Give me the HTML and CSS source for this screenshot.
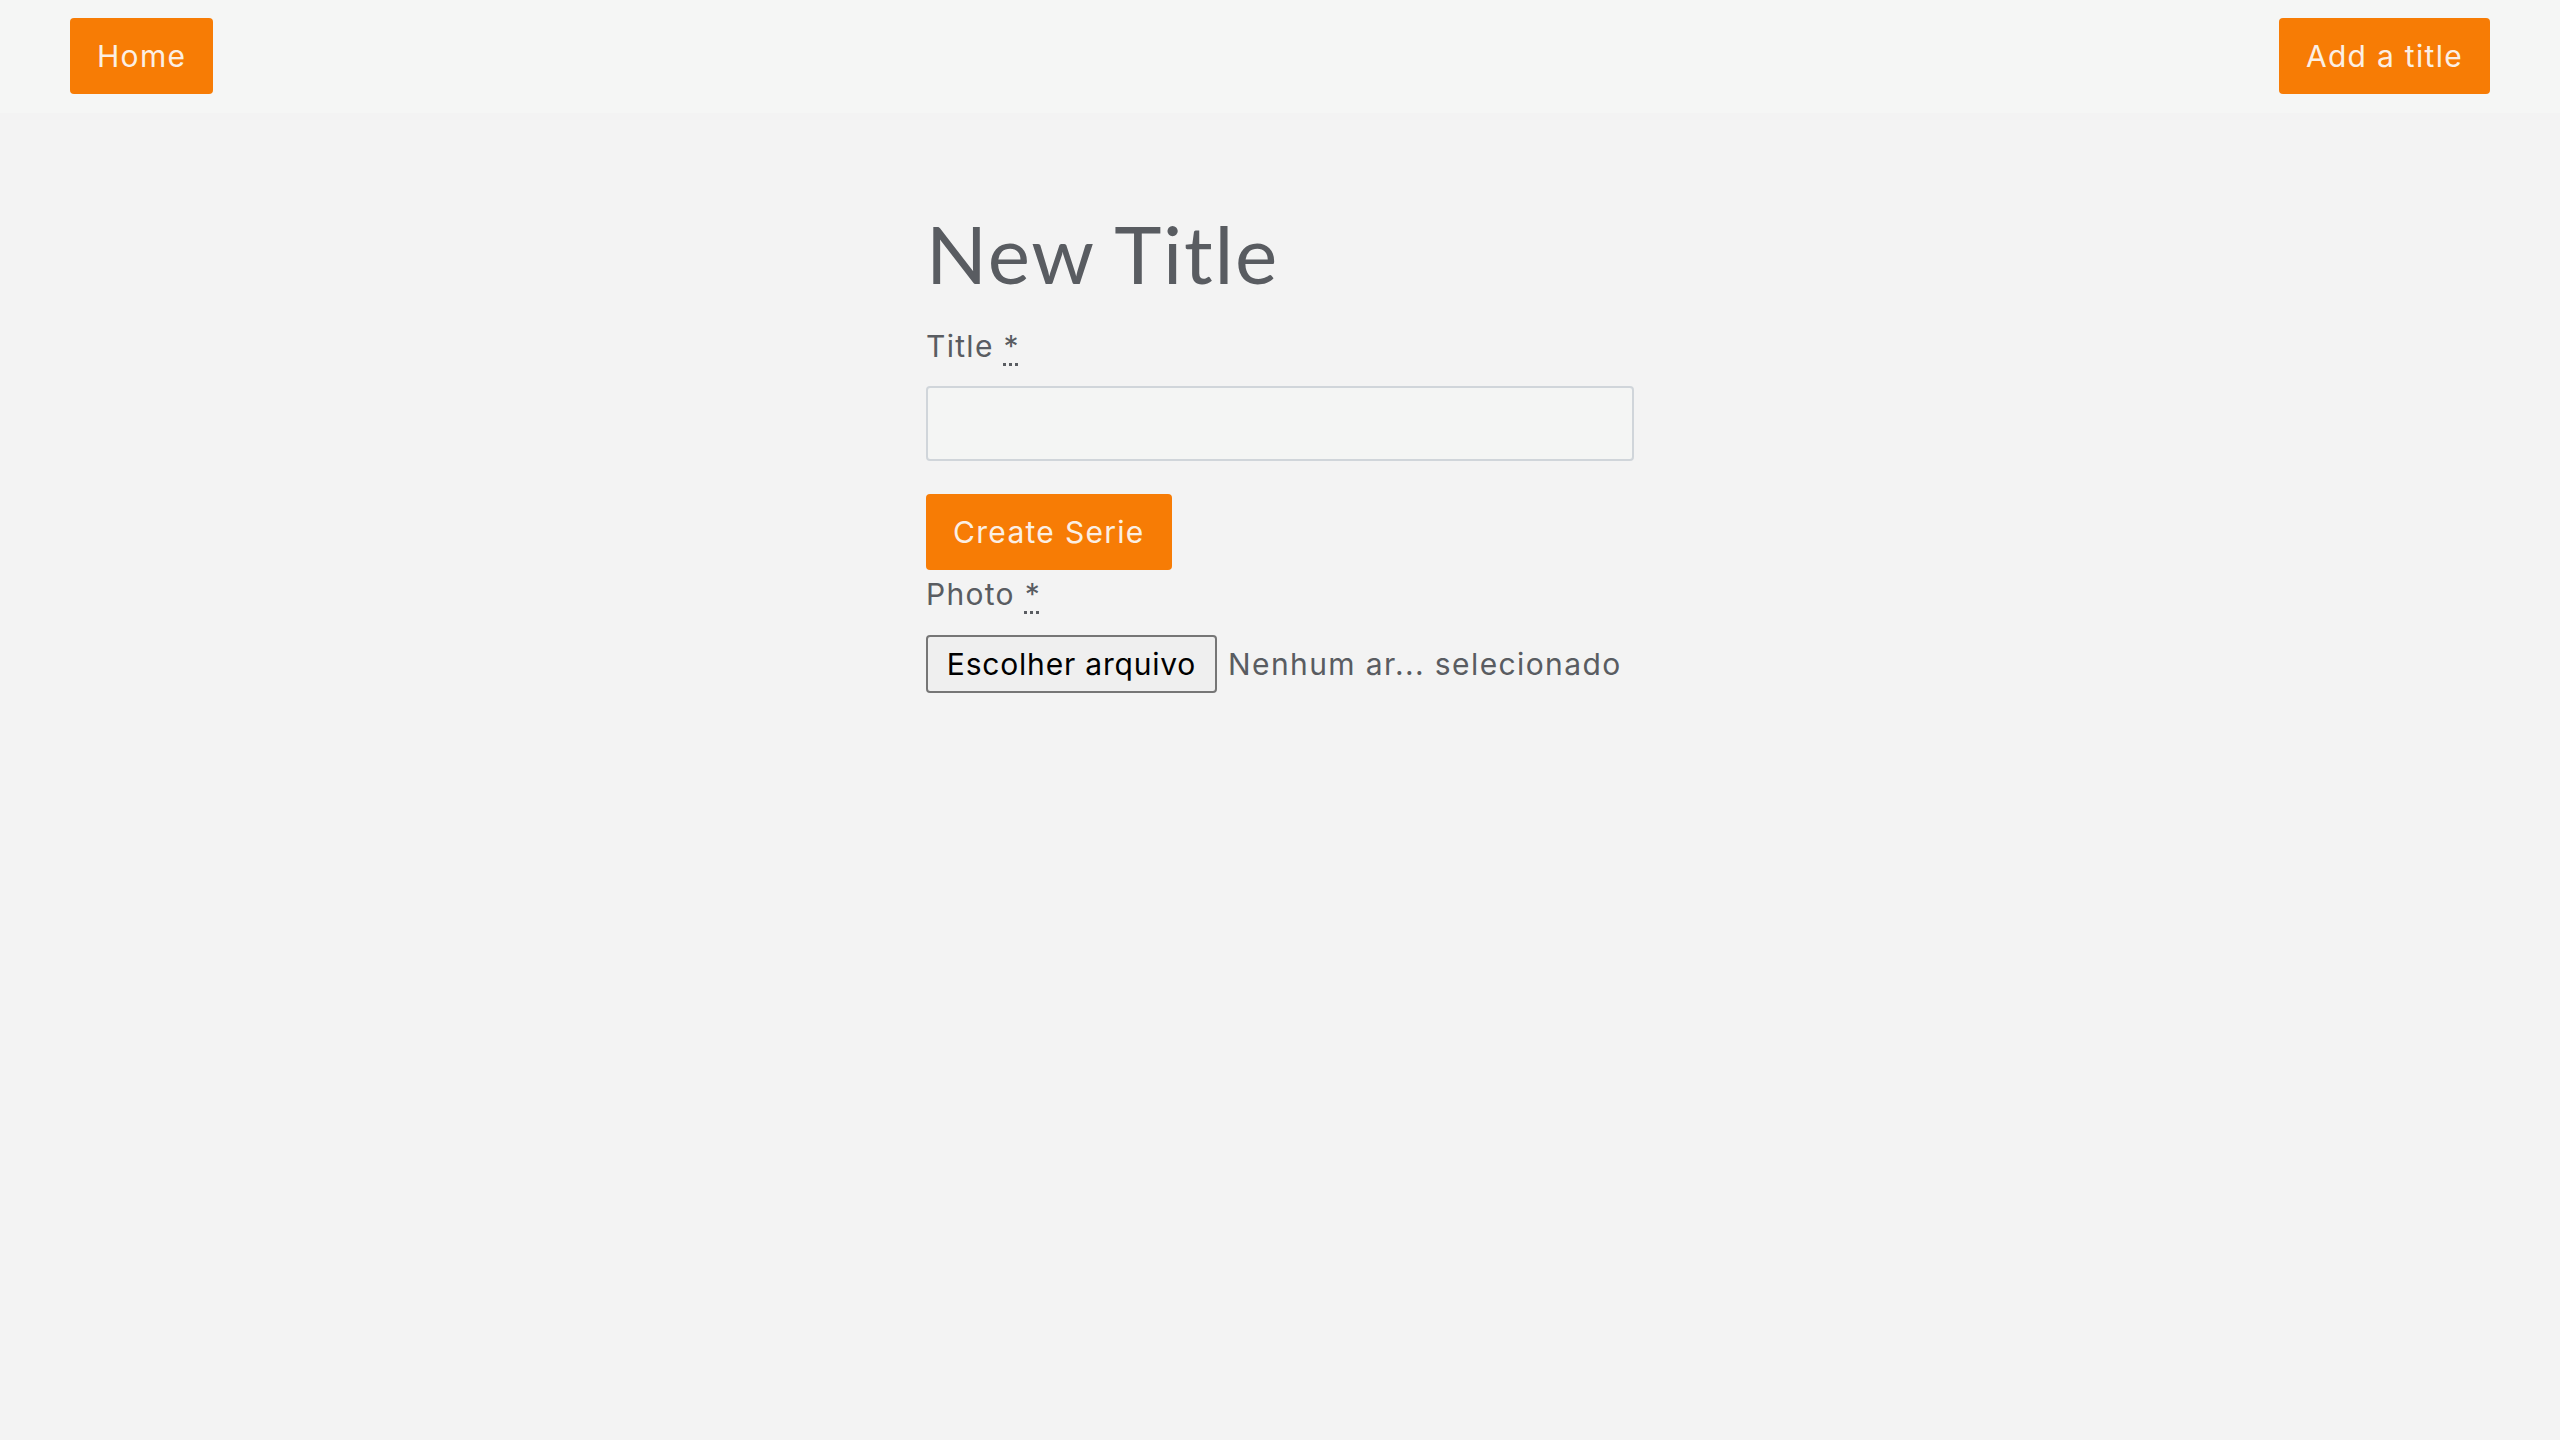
FILE: index.html
```html
<!DOCTYPE html>
<html lang="pt">
<head>
<meta charset="utf-8">
<title>New Title</title>
<link rel="stylesheet" href="styles.css">
</head>
<body>
<nav class="navbar">
  <a class="btn" href="#">Home</a>
  <a class="btn" href="#">Add a title</a>
</nav>
<main class="container">
  <h1 class="page-title">New Title</h1>
  <form class="form">
    <label class="label" for="title">Title <abbr title="required">*</abbr></label>
    <input class="text-input" id="title" type="text">
    <button class="btn submit" type="button">Create Serie</button>
    <label class="label" for="photo">Photo <abbr title="required">*</abbr></label>
    <div class="file-field">
      <span class="file-btn">Escolher arquivo</span>
      <span class="file-name">Nenhum ar... selecionado</span>
    </div>
  </form>
</main>
</body>
</html>
```
FILE: styles.css
```css
html, body {
  margin: 0;
  padding: 0;
}
body {
  background: #f3f3f3;
  font-family: Inter, "Open Sans", sans-serif;
  color: #595c61;
  min-height: 1440px;
}
.navbar {
  background: #f5f6f5;
  height: 113px;
  box-sizing: border-box;
  padding: 18px 70px 0 70px;
  display: flex;
  justify-content: space-between;
  align-items: flex-start;
}
.btn {
  display: inline-flex;
  align-items: center;
  justify-content: center;
  height: 76px;
  box-sizing: border-box;
  padding: 0 27px;
  background: #f77c05;
  color: #fbefe4;
  font-family: Inter, sans-serif;
  font-size: 30px;
  text-decoration: none;
  border: none;
  border-radius: 4px;
  letter-spacing: 1.3px;
}
.container {
  width: 708px;
  margin: 0 auto;
  padding-top: 92px;
}
.page-title {
  margin: 0;
  font-family: Lato, sans-serif;
  font-weight: 400;
  font-size: 80px;
  line-height: 96px;
  letter-spacing: 1.8px;
  color: #595c61;
}
.form {
  display: flex;
  flex-direction: column;
  align-items: flex-start;
  margin-top: 21px;
}
.label {
  font-size: 30px;
  line-height: 48px;
  letter-spacing: 1.3px;
  color: #595c61;
}
.label abbr {
  text-decoration: underline dotted;
  text-underline-offset: 6px;
  cursor: help;
}
.text-input {
  width: 708px;
  height: 75px;
  box-sizing: border-box;
  margin: 16px 0 33px 0;
  background: #f4f5f4;
  border: 2px solid #d0d5da;
  border-radius: 4px;
  font-size: 30px;
  padding: 0 16px;
  outline: none;
}
.submit {
  cursor: pointer;
}
.file-field {
  display: flex;
  align-items: center;
  margin-top: 17px;
  gap: 11px;
}
.file-btn {
  display: inline-flex;
  align-items: center;
  justify-content: center;
  width: 291px;
  height: 58px;
  box-sizing: border-box;
  background: #efefef;
  border: 2px solid #767676;
  border-radius: 4px;
  color: #000;
  font-size: 30px;
  letter-spacing: 0.8px;
}
.file-name {
  font-size: 30px;
  letter-spacing: 1.4px;
  color: #595c61;
}
```
